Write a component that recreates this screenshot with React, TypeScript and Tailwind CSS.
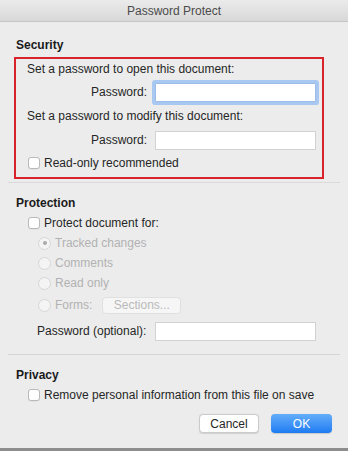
import React from "react";

function Checkbox() {
  return (
    <span className="inline-block h-[12px] w-[12px] shrink-0 rounded-[3px] border border-[#b9b9b9] bg-white shadow-[0_0.5px_0.5px_rgba(0,0,0,0.08)]" />
  );
}

function Radio({ checked }: { checked?: boolean }) {
  return (
    <span className="flex h-[13px] w-[13px] shrink-0 items-center justify-center rounded-full border border-[#d6d6d6] bg-[#f4f4f4]">
      {checked && <span className="h-[4px] w-[4px] rounded-full bg-[#a9a9a9]" />}
    </span>
  );
}

function TextInput({ focused }: { focused?: boolean }) {
  return (
    <div
      className={
        focused
          ? "h-[19px] w-[161px] border border-[#9bbcea] bg-white ring-[3px] ring-[#a8c8f2] rounded-[1px]"
          : "h-[19px] w-[161px] border border-[#d2d2d2] bg-white"
      }
    />
  );
}

export default function App() {
  return (
    <div className="flex h-[451px] w-[348px] flex-col bg-[#ececec] text-[12px] leading-[16px] text-[#262626] [font-family:'Liberation_Sans',Arial,sans-serif]">
      {/* title bar */}
      <div className="flex h-[22px] shrink-0 items-center justify-center border-b border-[#c6c6c6] bg-gradient-to-b from-[#ebebeb] to-[#d8d8d8]">
        <span className="text-[12px] text-[#4b4b4b]">Password Protect</span>
      </div>

      <div className="flex flex-1 flex-col px-[14px]">
        <div className="mt-[15px] pl-[2px] font-bold text-[#1a1a1a]">Security</div>

        {/* highlighted group */}
        <div className="mr-[10px] mt-[4px] border-2 border-[#d8222c] pb-[6px] pl-[11px]">
          <div className="mt-[1px] flex h-[18px] items-center">Set a password to open this document:</div>
          <div className="mt-[3px] flex h-[22px] items-center">
            <span className="w-[120px] text-right">Password:</span>
            <span className="ml-[8px]">
              <TextInput focused />
            </span>
          </div>
          <div className="mt-[4px] flex h-[18px] items-center">Set a password to modify this document:</div>
          <div className="mt-[5px] flex h-[20px] items-center">
            <span className="w-[120px] text-right">Password:</span>
            <span className="ml-[8px]">
              <TextInput />
            </span>
          </div>
          <div className="mt-[5px] flex h-[16px] items-center gap-[4px] pl-[1px]">
            <Checkbox />
            <span>Read-only recommended</span>
          </div>
        </div>

        <div className="-mx-[6px] mt-[3px] h-px bg-[#dadada]" />

        <div className="mt-[12px] pl-[2px] font-bold text-[#1a1a1a]">Protection</div>
        <div className="mt-[4px] flex h-[16px] items-center gap-[4px] pl-[14px]">
          <Checkbox />
          <span>Protect document for:</span>
        </div>

        <div className="mt-[2px] flex flex-col pl-[24px] text-[#b2b2b2]">
          <div className="flex h-[20px] items-center gap-[4px]">
            <Radio checked />
            <span>Tracked changes</span>
          </div>
          <div className="flex h-[20px] items-center gap-[4px]">
            <Radio />
            <span>Comments</span>
          </div>
          <div className="flex h-[20px] items-center gap-[4px]">
            <Radio />
            <span>Read only</span>
          </div>
          <div className="flex h-[24px] items-center gap-[4px]">
            <Radio />
            <span>Forms:</span>
            <span className="ml-[6px] flex h-[17px] w-[79px] items-center justify-center rounded-[4px] border border-[#e0e0e0] bg-[#f6f6f6] text-[#b9b9b9]">
              Sections...
            </span>
          </div>
        </div>

        <div className="mt-[4px] flex h-[20px] items-center pl-[23px]">
          <span className="w-[110px] whitespace-nowrap">Password (optional):</span>
          <span className="ml-[8px]">
            <TextInput />
          </span>
        </div>

        <div className="-mx-[6px] mt-[13px] h-px bg-[#d6d6d6]" />

        <div className="mt-[12px] pl-[2px] font-bold text-[#1a1a1a]">Privacy</div>
        <div className="mt-[4px] flex h-[16px] items-center gap-[4px] pl-[14px]">
          <Checkbox />
          <span>Remove personal information from this file on save</span>
        </div>

        <div className="mt-[11px] flex justify-end gap-[12px] pr-[2px]">
          <button className="flex h-[19px] w-[60px] items-center justify-center rounded-[4px] border border-[#cbcbcb] bg-white text-[12px] text-[#262626] shadow-[0_0.5px_1px_rgba(0,0,0,0.12)]">
            Cancel
          </button>
          <button className="flex h-[19px] w-[61px] items-center justify-center rounded-[4px] bg-gradient-to-b from-[#63adf9] to-[#1c7bf3] text-[12px] text-white shadow-[0_0.5px_1px_rgba(0,0,0,0.15)]">
            OK
          </button>
        </div>
      </div>

      <div className="h-[3px] shrink-0 bg-[#8d8d8d]" />
    </div>
  );
}
